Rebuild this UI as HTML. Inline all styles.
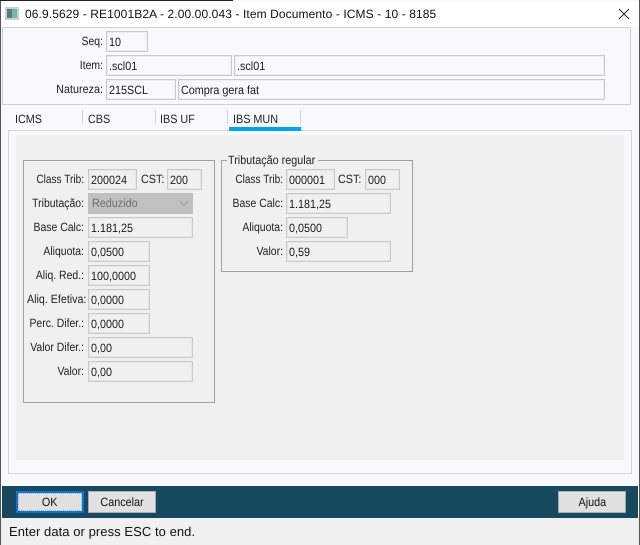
<!DOCTYPE html>
<html><head><meta charset="utf-8">
<style>
html,body{margin:0;padding:0;width:640px;height:545px;overflow:hidden;background:#555}
body{position:relative;font-family:"Liberation Sans",sans-serif;font-size:12px;color:#111;text-rendering:geometricPrecision}
div{position:absolute;box-sizing:border-box}
.i{border:1px solid #cacaca;box-shadow:inset 0 0 0 1px #e6e6e6;height:21px;padding-left:2px;line-height:20px;white-space:nowrap;overflow:hidden;font-size:12px;color:#1a1a1a}
.i span,.t span,.r span{display:inline-block;transform:scaleX(.9);transform-origin:left center}
.h{background:#f8f9fb;box-shadow:inset 0 0 0 1px #eceef0}
.g{background:#f0f0f0}
.l{text-align:right;height:16px;line-height:16px;white-space:nowrap;color:#222;font-size:12px;transform:scaleX(.87);transform-origin:right center}
.t{height:16px;line-height:16px;white-space:nowrap;font-size:12px;color:#222}
.s{width:1px;background:#d4d4d4;top:110px;height:14px}
.b{background:#e1e1e1;border:1px solid #adadad;height:22px;text-align:center;line-height:20px;font-size:12px;color:#111}
.b span{display:inline-block;transform:scaleX(.9)}
</style></head><body>
<div style="left:1px;top:0;width:638px;height:545px;background:#f8f9fb"></div>
<div style="left:0;top:0;width:233px;height:1px;background:#222"></div>
<div style="left:1px;top:1px;width:638px;height:26px;background:#fff"></div>
<svg style="position:absolute;left:5px;top:7px" width="14" height="13"><rect width="14" height="13" fill="#c8d2d2"/><rect x="2" y="2" width="5" height="9" fill="#4d7f86"/><rect x="7" y="2" width="5" height="9" fill="#7fb3a0"/></svg>
<div style="left:25px;top:5px;height:18px;line-height:18px;font-size:12px;letter-spacing:.1px;white-space:nowrap;color:#111">06.9.5629 - RE1001B2A - 2.00.00.043 - Item Documento - ICMS - 10 - 8185</div>
<svg style="position:absolute;left:618px;top:8px" width="12" height="12"><path d="M1 1L11 11M11 1L1 11" stroke="#222" stroke-width="1" fill="none"/></svg>

<div style="left:2px;top:27px;width:629px;height:78px;border:1px solid #d0d0d0"></div>
<div class="l" style="left:40px;top:33px;width:63px">Seq:</div>
<div class="i h" style="left:106px;top:31px;width:42px"><span>10</span></div>
<div class="l" style="left:40px;top:57px;width:63px">Item:</div>
<div class="i h" style="left:106px;top:55px;width:126px"><span>.scl01</span></div>
<div class="i h" style="left:234px;top:55px;width:371px"><span>.scl01</span></div>
<div class="l" style="left:40px;top:81px;width:63px;transform:scaleX(.9)">Natureza:</div>
<div class="i h" style="left:106px;top:79px;width:70px"><span>215SCL</span></div>
<div class="i h" style="left:178px;top:79px;width:427px"><span>Compra gera fat</span></div>

<div class="t" style="left:15px;top:111px"><span>ICMS</span></div>
<div class="s" style="left:82px"></div>
<div class="t" style="left:88px;top:111px"><span>CBS</span></div>
<div class="s" style="left:155px"></div>
<div class="t" style="left:160px;top:111px"><span>IBS UF</span></div>
<div class="s" style="left:227px"></div>
<div class="t" style="left:233px;top:111px"><span>IBS MUN</span></div>
<div class="s" style="left:300px"></div>

<div style="left:8px;top:130px;width:624px;height:344px;border:1px solid #d4d4d4;background:#f8f9fb"></div>
<div style="left:229px;top:127px;width:72px;height:4px;background:#00a2e8"></div>
<div class="g" style="left:16px;top:135px;width:608px;height:325px"></div>

<div style="left:23px;top:160px;width:192px;height:243px;border:1px solid #a0a0a0;background:#f0f0f0"></div>
<div class="l" style="left:20px;top:171px;width:64px;transform:scaleX(.84)">Class Trib:</div>
<div class="i" style="left:88px;top:169px;width:49px"><span>200024</span></div>
<div class="t" style="left:141px;top:171px"><span>CST:</span></div>
<div class="i" style="left:167px;top:169px;width:35px"><span>200</span></div>
<div class="l" style="left:20px;top:195px;width:64px">Tributação:</div>
<div style="left:88px;top:193px;width:105px;height:21px;background:#c0c0c0;color:#6d6d6d;padding-left:4px;line-height:20px"><span style="display:inline-block;transform:scaleX(.9);transform-origin:left center">Reduzido</span></div>
<svg style="position:absolute;left:179px;top:200px" width="10" height="8"><path d="M1 1.5L5 5.5L9 1.5" stroke="#9a9a9a" stroke-width="1" fill="none"/></svg>
<div class="l" style="left:20px;top:219px;width:64px">Base Calc:</div>
<div class="i" style="left:88px;top:217px;width:105px"><span>1.181,25</span></div>
<div class="l" style="left:20px;top:243px;width:64px">Aliquota:</div>
<div class="i" style="left:88px;top:241px;width:62px"><span>0,0500</span></div>
<div class="l" style="left:20px;top:267px;width:64px">Aliq. Red.:</div>
<div class="i" style="left:88px;top:265px;width:62px"><span>100,0000</span></div>
<div class="l" style="left:20px;top:291px;width:64px;transform:scaleX(.89)">Aliq. Efetiva:</div>
<div class="i" style="left:88px;top:289px;width:62px"><span>0,0000</span></div>
<div class="l" style="left:20px;top:315px;width:64px">Perc. Difer.:</div>
<div class="i" style="left:88px;top:313px;width:62px"><span>0,0000</span></div>
<div class="l" style="left:20px;top:339px;width:64px">Valor Difer.:</div>
<div class="i" style="left:88px;top:337px;width:105px"><span>0,00</span></div>
<div class="l" style="left:20px;top:363px;width:64px">Valor:</div>
<div class="i" style="left:88px;top:361px;width:105px"><span>0,00</span></div>

<div style="left:221px;top:160px;width:192px;height:112px;border:1px solid #a0a0a0"></div>
<div class="t" style="left:227px;top:152px;background:#f0f0f0;padding:0 1px;width:91px"><span>Tributação regular</span></div>
<div class="l" style="left:218px;top:171px;width:65px;transform:scaleX(.84)">Class Trib:</div>
<div class="i" style="left:286px;top:169px;width:49px"><span>000001</span></div>
<div class="t" style="left:338px;top:171px"><span>CST:</span></div>
<div class="i" style="left:365px;top:169px;width:35px"><span>000</span></div>
<div class="l" style="left:218px;top:195px;width:65px">Base Calc:</div>
<div class="i" style="left:286px;top:193px;width:105px"><span>1.181,25</span></div>
<div class="l" style="left:218px;top:219px;width:65px">Aliquota:</div>
<div class="i" style="left:286px;top:217px;width:62px"><span>0,0500</span></div>
<div class="l" style="left:218px;top:243px;width:65px">Valor:</div>
<div class="i" style="left:286px;top:241px;width:105px"><span>0,59</span></div>

<div style="left:2px;top:486px;width:636px;height:32px;background:#174a5e"></div>
<div class="b" style="left:16px;top:491px;width:68px;border:2px solid #0078d7;line-height:18px;outline:1px dotted #d99;outline-offset:-3px"><span>OK</span></div>
<div class="b" style="left:88px;top:491px;width:68px"><span>Cancelar</span></div>
<div class="b" style="left:558px;top:491px;width:68px"><span>Ajuda</span></div>
<div class="g" style="left:1px;top:518px;width:638px;height:27px"></div>
<div style="left:9px;top:523px;height:18px;line-height:18px;font-size:13px;letter-spacing:.06px;white-space:nowrap;color:#111">Enter data or press ESC to end.</div>
</body></html>
